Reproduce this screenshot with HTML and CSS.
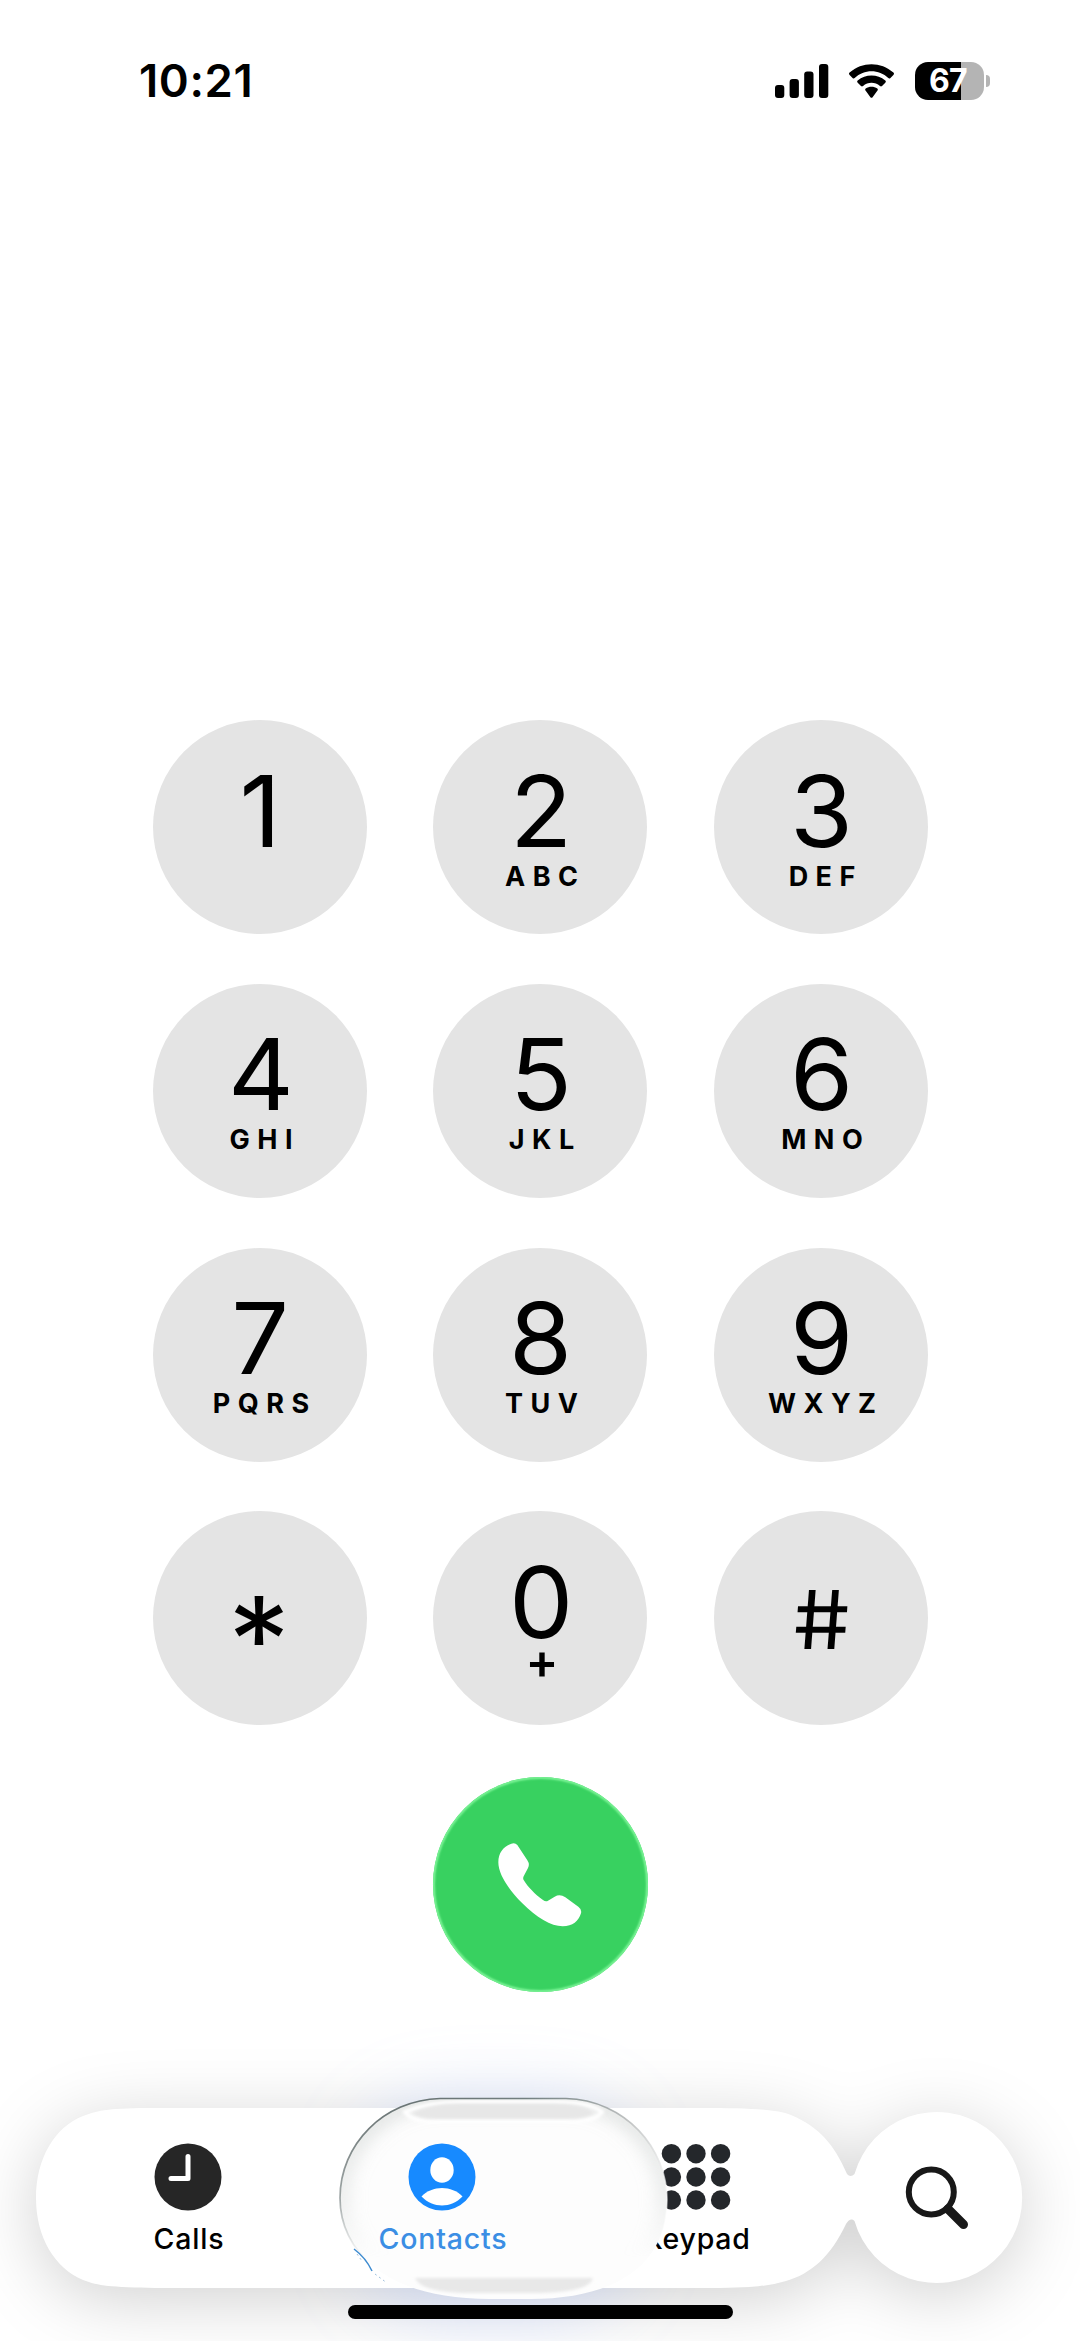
FILE: index.html
```html
<!DOCTYPE html>
<html lang="en">
<head>
<meta charset="utf-8">
<title>Phone</title>
<link rel="stylesheet" href="styles.css">
</head>
<body>
<div class="screen">
  <header class="status">
    <div class="time">10:21</div>
    <div class="indicators">
      <svg class="signal" width="54" height="34" viewBox="0 0 54 34"><rect x="0" y="21" width="9.3" height="13" rx="3"/><rect x="14.6" y="15" width="9.3" height="19" rx="3"/><rect x="29.2" y="7.5" width="9.3" height="26.5" rx="3"/><rect x="44" y="0" width="9.3" height="34" rx="3"/></svg>
      <svg class="wifi" width="47" height="34" viewBox="0 0 47 34"><path d="M1.6 8.6C14-2.7 33-2.7 45.4 8.6Q46.6 9.8 45.4 11L42.2 14.2Q41.3 15 40.3 14.1C31 5.1 16 5.1 6.7 14.1Q5.7 15 4.8 14.2L1.6 11Q.4 9.8 1.6 8.6ZM9.7 16.5C17.5 9.8 29.5 9.8 37.3 16.5Q38.4 17.6 37.3 18.7L34 22Q33 22.9 32 22C27 17.7 20 17.7 15 22Q14 22.9 13 22L9.7 18.7Q8.6 17.6 9.7 16.5ZM17.7 24.6C21 22 26 22 29.3 24.6Q30.4 25.7 29.3 26.8L24.6 33.2Q23.5 34.2 22.4 33.2L17.7 26.8Q16.6 25.7 17.7 24.6Z"/></svg>
      <div class="battery"><span>67</span></div>
      <div class="battery-cap"></div>
    </div>
  </header>

  <main class="dialer">
    <div class="keys">
      <button class="key"><span class="digit">1</span></button>
      <button class="key"><span class="digit">2</span><span class="letters">ABC</span></button>
      <button class="key"><span class="digit">3</span><span class="letters">DEF</span></button>
      <button class="key"><span class="digit">4</span><span class="letters">GHI</span></button>
      <button class="key"><span class="digit">5</span><span class="letters">JKL</span></button>
      <button class="key"><span class="digit">6</span><span class="letters">MNO</span></button>
      <button class="key"><span class="digit">7</span><span class="letters">PQRS</span></button>
      <button class="key"><span class="digit">8</span><span class="letters">TUV</span></button>
      <button class="key"><span class="digit">9</span><span class="letters">WXYZ</span></button>
      <button class="key"><span class="digit star">*</span></button>
      <button class="key"><span class="digit">0</span><span class="letters plus">+</span></button>
      <button class="key"><span class="digit hash">#</span></button>
    </div>
    <button class="call" aria-label="Call">
      <svg width="215" height="215" viewBox="70 82 645 645"><path fill="#fff" d="M323 286Q316 278 305 282C282 290 266 308 266 338C266 374 297 420 338 461C380 503 424 530 459 530C489 530 507 514 514 491Q517 479 506 471L467 443Q451 432 435 441L415 453Q408 457 400 451C376 434 354 411 342 391Q339 386 342 380L355 355Q361 344 353 332Z"/></svg>
    </button>
  </main>

  <nav class="dock">
    <svg class="glass" width="1080" height="361" viewBox="0 1980 1080 361">
      <defs>
        <filter id="soft" x="-20%" y="-60%" width="140%" height="220%"><feGaussianBlur stdDeviation="34"/></filter>
        <filter id="tint" x="-50%" y="-80%" width="200%" height="260%"><feGaussianBlur stdDeviation="32"/></filter>
        <path id="surface" d="M155 2108H700C748 2108 775 2109 791 2115C819 2127 834 2144 847 2174Q850.500 2178 854.500 2174A85.500 85.500 0 1 1 854.500 2221Q850.500 2217 846 2224C831 2256 811 2274 786 2281C765 2287 748 2288 700 2288H155C110 2287 99 2286 83 2280C55 2268 36 2238 36 2198C36 2158 55 2127 83 2116C99 2110 110 2108 155 2108Z"/>
      </defs>
      <use href="#surface" fill="#000" fill-opacity=".18" filter="url(#soft)" transform="translate(0 12)"/>
      <rect x="350" y="2095" width="290" height="225" rx="100" fill="#a9c3ff" fill-opacity=".33" filter="url(#tint)"/>
      <use href="#surface" fill="#fff"/>
    </svg>
    <div class="tabs">
      <a class="tab">
        <svg width="68" height="68" viewBox="-34 -34 68 68"><circle r="33.5" fill="#262626"/><path d="M0-20.500V1.500H-17" fill="none" stroke="#fff" stroke-width="5" stroke-linecap="round" stroke-linejoin="round"/></svg>
        <span>Calls</span>
      </a>
      <a class="tab active">
        <svg width="68" height="68" viewBox="-34 -34 68 68"><circle r="33.5" fill="#178aff"/><ellipse cy="-7" rx="11.700" ry="12.700" fill="#fff"/><path d="M-20.500 19.500C-10 8 10 8 20.500 19.500C9 31.500-9 31.500-20.500 19.500Z" fill="#fff"/></svg>
        <span>Contacts</span>
      </a>
      <a class="tab">
        <svg width="70" height="68" viewBox="-35 -34 70 68" fill="#24272b"><circle cx="-24.600" cy="-23.300" r="9.700"/><circle cy="-23.300" r="9.700"/><circle cx="24.600" cy="-23.300" r="9.700"/><circle cx="-24.600" r="9.700"/><circle r="9.700"/><circle cx="24.600" r="9.700"/><circle cx="-24.600" cy="23" r="9.700"/><circle cy="23" r="9.700"/><circle cx="24.600" cy="23" r="9.700"/></svg>
        <span>Keypad</span>
      </a>
    </div>
    <a class="search" aria-label="Search">
      <svg width="64" height="64" viewBox="904 2165 64 64"><path d="M948 2209L963.500 2224.500" stroke="#181818" stroke-width="9" stroke-linecap="round"/><circle cx="931.300" cy="2192" r="22.500" fill="none" stroke="#181818" stroke-width="6"/></svg>
    </a>
    <svg class="lens" width="1080" height="341" viewBox="0 2000 1080 341">
      <defs>
        <linearGradient id="rim" x1="0" y1="0" x2="1" y2=".5"><stop offset="0" stop-color="#5c6666"/><stop offset=".45" stop-color="#6d7b7c"/><stop offset=".75" stop-color="#b9bcbc"/><stop offset="1" stop-color="#fff"/></linearGradient>
        <linearGradient id="rimfade" x1="0" y1="0" x2="0" y2="1"><stop offset="0" stop-color="#fff"/><stop offset=".5" stop-color="#999"/><stop offset=".78" stop-color="#000"/></linearGradient>
        <mask id="fade"><rect x="330" y="2090" width="345" height="215" fill="url(#rimfade)"/></mask>
        <path id="pill" d="M440 2098.500H566C625 2100 667 2148 667 2200C667 2260 622 2299 530 2299H490C384 2299 340 2250 340 2198C340 2144 384 2100 440 2098.500Z"/>
        <clipPath id="inside"><use href="#pill"/></clipPath>
        <filter id="b8" x="-20%" y="-20%" width="140%" height="140%"><feGaussianBlur stdDeviation="9"/></filter>
        <filter id="b2" x="-10%" y="-60%" width="120%" height="220%"><feGaussianBlur stdDeviation="1.6"/></filter>
      </defs>
      <use href="#pill" fill="#fdfdfd"/>
      <g clip-path="url(#inside)" mask="url(#fade)"><use href="#pill" fill="none" stroke="#b9bfbd" stroke-opacity=".5" stroke-width="16" filter="url(#b8)"/></g>
      <g clip-path="url(#inside)">
        <path d="M405 2112Q430 2102 460 2102H555Q590 2102 602 2112Q596 2121 575 2121H430Q411 2121 405 2112Z" fill="none" stroke="#fff" stroke-width="4" filter="url(#b2)"/>
        <path d="M412 2113Q430 2104 460 2104H550Q584 2104 594 2113Q586 2119 570 2119H434Q419 2119 412 2113Z" fill="#e7e7e7" filter="url(#b2)"/>
        <path d="M415 2278H593C590 2288 572 2292 540 2293H464C436 2292 420 2288 415 2278Z" fill="#e8e8e8" filter="url(#b2)"/>
      </g>
      <use href="#pill" fill="none" stroke="url(#rim)" stroke-width="1.700" mask="url(#fade)"/>
      <path d="M354 2249Q366 2258 372 2271" fill="none" stroke="#3e8bd0" stroke-width="1.500"/>
      <path d="M375 2274L387 2283M357 2254L362 2261" fill="none" stroke="#9fc0dc" stroke-width="1" stroke-dasharray="2 3"/>
    </svg>
    <div class="home"></div>
  </nav>
</div>
</body>
</html>
```
FILE: styles.css
```css
* { box-sizing: border-box; }
body { margin: 0; background: #fff; color: #000; font-family: Inter, "Liberation Sans", sans-serif; }
button { border: 0; padding: 0; font: inherit; color: inherit; }
svg { display: block; }

.screen { width: 1080px; height: 2341px; overflow: hidden; display: flex; flex-direction: column; background: #fff; }

.status { height: 720px; padding: 52px 90px 0 139px; display: flex; justify-content: space-between; align-items: flex-start; }
.time { font-size: 45.500px; font-weight: 600; line-height: 58px; letter-spacing: 0.600px; }
.indicators { display: flex; align-items: center; height: 57px; }
.wifi { margin-left: 19px; }
.battery { width: 69px; height: 38px; margin-left: 20px; border-radius: 13px; background: linear-gradient(90deg, #000 46px, #b4b4b4 46px); color: #fff; font-size: 32px; font-weight: 650; line-height: 38px; text-align: center; letter-spacing: -0.800px; padding-right: 3px; }
.battery-cap { width: 4px; height: 12px; margin-left: 2px; border-radius: 0 6px 6px 0; background: #b4b4b4; }

.dialer { display: flex; flex-direction: column; align-items: center; height: 1280px; }
.keys { display: grid; grid-template-columns: repeat(3, 214px); column-gap: 66.500px; row-gap: 49.800px; }
.key { width: 214px; height: 214px; border-radius: 50%; background: #e4e4e4; display: flex; flex-direction: column; align-items: center; padding-top: 40.500px; }
.digit { font-size: 99px; line-height: 100px; height: 100px; font-weight: 400; margin-left: 2px; transform: scaleX(1.03); }
.letters { font-size: 27px; line-height: 32px; font-weight: 650; letter-spacing: 7.500px; margin: 0 -10.500px 0 0; }
.plus { font-size: 49px; font-weight: 600; letter-spacing: 0; margin: -6px -4px 0 0; }
.star { font-size: 120px; padding-top: 38px; margin-left: 0; }
.hash { font-size: 81px; padding-top: 18px; transform: skewX(6deg) scaleX(1.12); transform-origin: 50% 68px; }
.call { width: 215px; height: 215px; margin-top: 52px; border-radius: 50%; background: #38d160; box-shadow: inset 0 0 2px 2px #79f294; }

.dock { position: relative; height: 341px; flex: none; display: flex; padding-left: 61px; }
.glass, .lens { position: absolute; left: 0; top: 0; }
.glass { top: -20px; }
.lens { z-index: 1; pointer-events: none; }
.tabs { display: flex; padding-top: 143px; }
.tab { width: 254px; display: flex; flex-direction: column; align-items: center; position: relative; }
.tab span { margin: 11px 0 0 2px; font-size: 28.500px; line-height: 34px; font-weight: 450; letter-spacing: 0.800px; }
.active { z-index: 2; color: #3b8ee4; }
.search { position: relative; margin: 165px 0 0 81px; }
.home { position: absolute; z-index: 3; left: 348px; top: 305px; width: 385px; height: 14px; border-radius: 7px; background: #000; }
```
